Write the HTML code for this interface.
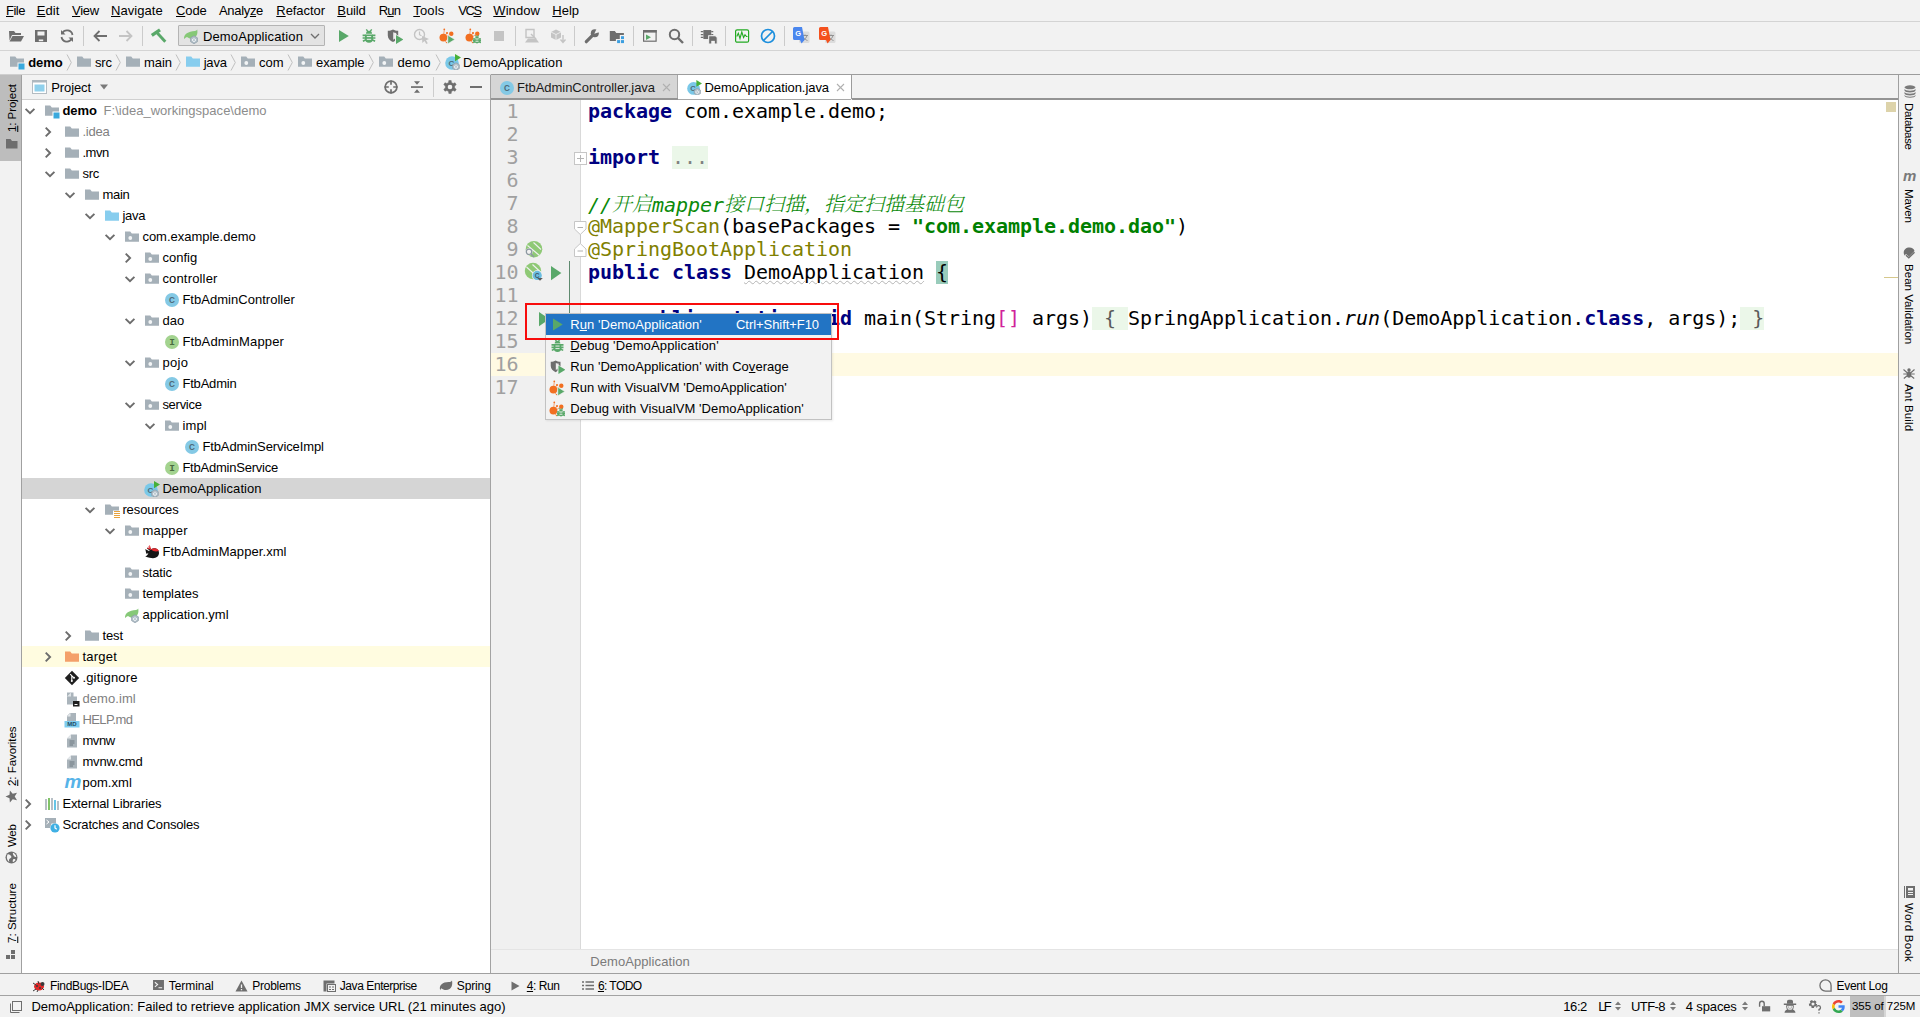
<!DOCTYPE html>
<html lang="en"><head><meta charset="utf-8"><title>demo - DemoApplication.java - IntelliJ IDEA</title>
<style>
html,body{margin:0;padding:0;}
body{width:1920px;height:1017px;overflow:hidden;position:relative;background:#f2f2f2;font-family:"Liberation Sans","Noto Sans CJK SC",sans-serif;font-size:13px;color:#000;}
.t{position:absolute;white-space:pre;display:block;}
.i{position:absolute;display:block;overflow:visible;}
.b{position:absolute;}
u{text-decoration:underline;text-underline-offset:1px;text-decoration-thickness:1px;}
.code{font-family:"DejaVu Sans Mono","Liberation Mono",monospace;font-size:20px;letter-spacing:-0.041px;}
.kw{color:#000080;font-weight:bold;}
.str{color:#008000;font-weight:bold;}
.ann{color:#808000;}
.cm{color:#0a8a0a;font-style:italic;}
.cn{font-family:"Noto Serif CJK SC",serif;font-weight:300;font-style:italic;font-size:20px;letter-spacing:0;position:relative;top:-1.500px;}

</style></head>
<body>

<svg width="0" height="0" style="position:absolute">
<defs>
<symbol id="i-folder" viewBox="0 0 16 16"><path d="M1 2.5h5.2l1.6 2H15v8.2H1z" fill="#a5b0b8"/></symbol>
<symbol id="i-src" viewBox="0 0 16 16"><path d="M1 2.5h5.2l1.6 2H15v8.2H1z" fill="#87cdee"/></symbol>
<symbol id="i-excl" viewBox="0 0 16 16"><path d="M1 2.5h5.2l1.6 2H15v8.2H1z" fill="#f4a06a"/></symbol>
<symbol id="i-pkg" viewBox="0 0 16 16"><path d="M1 2.5h5.2l1.6 2H15v8.2H1z" fill="#a5b0b8"/><circle cx="6.3" cy="9" r="1.9" fill="#f3f5f6"/></symbol>
<symbol id="i-module" viewBox="0 0 16 16"><path d="M1 2.5h5.2l1.6 2H15v4H8.5v4.200H1z" fill="#a5b0b8"/><rect x="9.5" y="9.5" width="6" height="6" fill="#3aa9dd"/></symbol>
<symbol id="i-res" viewBox="0 0 16 16"><path d="M1 2.5h5.2l1.6 2H15v4H9v4.200H1z" fill="#a5b0b8"/><path d="M10 9.5h6M10 11.5h6M10 13.5h6M10 15.5h6" stroke="#e8a33d" stroke-width="1"/></symbol>
<symbol id="i-class" viewBox="0 0 16 16"><circle cx="8" cy="8" r="7" fill="#84c9e5"/><text x="8" y="10.900" text-anchor="middle" font-family="Liberation Sans,sans-serif" font-size="8.200" font-weight="700" fill="#4d6876">C</text></symbol>
<symbol id="i-iface" viewBox="0 0 16 16"><circle cx="8" cy="8" r="7" fill="#a3d38f"/><text x="8" y="11" text-anchor="middle" font-family="Liberation Mono,monospace" font-size="9.500" font-weight="700" fill="#4a6b40">I</text></symbol>
<symbol id="i-app" viewBox="0 0 16 16"><circle cx="7" cy="9" r="6.800" fill="#7ac8e8"/><text x="6.300" y="11.800" text-anchor="middle" font-family="Liberation Sans,sans-serif" font-size="8" font-weight="700" fill="#4d6876">C</text><path d="M10 0l6 3.600L10 7.200z" fill="#47b038"/><path d="M11 8.800l3.300 1.900v3.800L11 16.400l-3.300-1.900v-3.800z" fill="#b3c0c9" stroke="#8b9ba6" stroke-width=".7"/><path d="M9.700 11.800a1.600 1.600 0 1 0 2.600 0M11 10.800v1.600" fill="none" stroke="#f4f7f9" stroke-width=".9"/></symbol>
<symbol id="i-bird" viewBox="0 0 16 16"><path d="M1.200 12.500c1.500-.6 2.500-1.600 3-3C4.800 6.500 7 4.300 10 4.300c3 0 5 2 5 4.700 0 3-2.500 5.200-6 5.200-2.200 0-4.300-.4-7.800-1.700z" fill="#161616"/><path d="M2.200 6.300l3.800 2-3.200.7zM3.300 4l3.500 2.500" stroke="#161616" stroke-width="1.300" fill="#161616"/><path d="M7 5.600c2.200-2 6-1.600 8 1.200-2.500 1.300-5.800.8-8-1.200z" fill="#e3262c"/><path d="M7.300 5.300L4.300 2.800M7 5l-3.700-.6M6.300 4.300L5.500 1.500" stroke="#e3262c" stroke-width="1"/></symbol>
<symbol id="i-yml" viewBox="0 0 16 16"><path d="M1 10.500C1 6 5 3.500 12 3c1-.1 1.800-.8 2.200-1.500.8 3.500-.2 9-6 9-2 0-3.200-.6-4.200-1.500C3 9.500 2 10 1.200 11z" fill="#86c877"/><path d="M11 7.800l3.400 2v3.900l-3.400 2-3.400-2V9.800z" fill="#b3c0c9" stroke="#8b9ba6" stroke-width=".7"/><path d="M9.700 11a1.600 1.600 0 1 0 2.600 0M11 10v1.600" fill="none" stroke="#f4f7f9" stroke-width=".9"/></symbol>
<symbol id="i-git" viewBox="0 0 16 16"><path d="M8 .8L15.200 8 8 15.200.8 8z" fill="#1f1f1f"/><path d="M6.200 4.200l3.500 3.500M7.800 5.500v5.500" stroke="#fff" stroke-width="1.100" fill="none"/><circle cx="7.800" cy="11" r="1" fill="#fff"/><circle cx="10" cy="7.800" r="1" fill="#fff"/></symbol>
<symbol id="i-iml" viewBox="0 0 16 16"><path d="M3 1.500h6.500v4H13v8H3z" fill="#aab4bb"/><path d="M3 5.500L7 1.500v4z" fill="#dfe4e7"/><rect x="9" y="10" width="6.500" height="5.500" fill="#1e1e1e"/><rect x="10.500" y="13" width="3" height="1" fill="#fff"/></symbol>
<symbol id="i-md" viewBox="0 0 16 16"><path d="M6 1h6v8H3V4z" fill="#aab4bb"/><path d="M3 4.500L6.500 1v3.500z" fill="#e3e7ea"/><rect x="0.500" y="9" width="15" height="6.500" fill="#7fcdf0"/><text x="8" y="14.300" text-anchor="middle" font-family="Liberation Sans,sans-serif" font-size="6" font-weight="700" fill="#1e4b63">MD</text></symbol>
<symbol id="i-txt" viewBox="0 0 16 16"><path d="M7 1.500h6v13H3V5.500z" fill="#aab4bb"/><path d="M3 5.500L7 1.500v4z" fill="#e3e7ea"/><path d="M5.500 8h5M5.500 10h5M5.500 12h3.500" stroke="#6d7880" stroke-width="1"/></symbol>
<symbol id="i-lib" viewBox="0 0 16 16"><path d="M2 3v11" stroke="#a5b0b8" stroke-width="1.600"/><path d="M5 2v12" stroke="#62b543" stroke-width="1.600"/><path d="M8 2v12" stroke="#a5b0b8" stroke-width="1.600"/><path d="M11 4v10" stroke="#40b6e0" stroke-width="1.600"/><path d="M14 5v9" stroke="#a5b0b8" stroke-width="1.600"/></symbol>
<symbol id="i-scratch" viewBox="0 0 16 16"><path d="M1 1h11v5.500H7.500L6 11H1z" fill="#a5b0b8"/><path d="M2.500 3l2.500 2-2.500 2" stroke="#fff" stroke-width="1" fill="none"/><circle cx="11" cy="11" r="4.600" fill="#3fb0e4"/><path d="M11 8.300V11l1.800 1.200" stroke="#fff" stroke-width="1.200" fill="none"/></symbol>
<symbol id="i-down" viewBox="0 0 16 16"><path d="M3.600 5.800l4.400 4.400 4.400-4.400" fill="none" stroke="#6c6c6c" stroke-width="1.900"/></symbol>
<symbol id="i-right" viewBox="0 0 16 16"><path d="M3.700 3.600L8.100 8l-4.400 4.400" fill="none" stroke="#6c6c6c" stroke-width="1.900"/></symbol>
<symbol id="i-run" viewBox="0 0 16 16"><path d="M3 2L12.800 8 3 14z" fill="#59a869"/></symbol>
<symbol id="i-bug" viewBox="0 0 16 16"><path d="M5.300 1.300L7 3.600M10.700 1.300L9 3.600" stroke="#59a869" stroke-width="1.400"/><path d="M5 5.800a3 3 0 0 1 6 0z" fill="#59a869"/><path d="M4 6.500h8v4.300a4 4 0 0 1-8 0z" fill="#59a869"/><path d="M1.600 7.300h3M11.400 7.300h3M1.600 10h3M11.400 10h3M1.900 13.200l3-1.400M14.100 13.200l-3-1.400" stroke="#59a869" stroke-width="1.700"/><path d="M5.800 8.600h4.400M5.800 11.300h4.400" stroke="#f2f2f2" stroke-width="1"/></symbol>
<symbol id="i-cover" viewBox="0 0 16 16"><path d="M.8 2.800C2.800 2.800 4.500 2.300 6 1.500c1.500.8 3.200 1.300 5.200 1.300v4.700c0 3.300-2.400 5.300-5.200 6.500C3.200 12.800.8 10.800.8 7.500z" fill="#6e6e6e"/><path d="M6.200 4.200c1 .4 2 .6 3 .7v2.800c0 1.800-1.200 3-3 4z" fill="#ececec"/><path d="M8 5.500l9 6-9 6z" fill="#f2f2f2"/><path d="M9 6.900l7.300 4.600L9 16z" fill="#59a869"/></symbol>
<symbol id="i-vvm" viewBox="0 0 16 16"><circle cx="4.400" cy="9.600" r="3.900" fill="#f26f21"/><circle cx="12.300" cy="5.700" r="2.200" fill="#f26f21"/><circle cx="8" cy="5" r="1.100" fill="#f26f21"/><circle cx="5.300" cy="1.300" r=".9" fill="#f26f21"/><circle cx="7.500" cy="14.600" r=".7" fill="#f26f21"/><path d="M5.300 1.500L4.800 6M7.800 5.200L6.300 7.500M10.800 6.500l-3 2M7.300 14.500L6 12.500" stroke="#f26f21" stroke-width=".6"/><path d="M8.800 7.200l7 4.300-7 4.300z" fill="#59a869" stroke="#f2f2f2" stroke-width=".6"/></symbol>
<symbol id="i-vvmd" viewBox="0 0 16 16"><circle cx="4.400" cy="9.600" r="3.900" fill="#f26f21"/><circle cx="12.300" cy="5.700" r="2.200" fill="#f26f21"/><circle cx="8" cy="5" r="1.100" fill="#f26f21"/><circle cx="5.300" cy="1.300" r=".9" fill="#f26f21"/><circle cx="7.500" cy="14.600" r=".7" fill="#f26f21"/><path d="M5.300 1.500L4.800 6M7.800 5.200L6.300 7.500M10.800 6.500l-3 2M7.300 14.500L6 12.500" stroke="#f26f21" stroke-width=".6"/><g transform="translate(7.200 6.600) scale(.6)"><path d="M5.300 1.300L7 3.600M10.700 1.300L9 3.600" stroke="#59a869" stroke-width="1.800"/><path d="M5 5.800a3 3 0 0 1 6 0z" fill="#59a869"/><path d="M4 6.500h8v4.300a4 4 0 0 1-8 0z" fill="#59a869"/><path d="M1.200 7.300h3.500M11.300 7.300h3.500M1.200 10.200h3.500M11.300 10.200h3.500M1.500 13.500l3.300-1.500M14.500 13.500l-3.300-1.500" stroke="#59a869" stroke-width="2.200"/><path d="M5.500 8.700h5M5.500 11.400h5" stroke="#f2f2f2" stroke-width="1.200"/></g></symbol>
</defs></svg>

<div class="b" style="left:0px;top:21px;width:1920px;height:1px;background:#d4d4d4;"></div>
<span class="t" style="left:6.0px;top:1.0px;height:19px;line-height:19px;font-size:13px;color:#000;letter-spacing:-0.488px;"><u>F</u>ile</span>
<span class="t" style="left:36.7px;top:1.0px;height:19px;line-height:19px;font-size:13px;color:#000;letter-spacing:0.048px;"><u>E</u>dit</span>
<span class="t" style="left:72.0px;top:1.0px;height:19px;line-height:19px;font-size:13px;color:#000;letter-spacing:-0.238px;"><u>V</u>iew</span>
<span class="t" style="left:111.0px;top:1.0px;height:19px;line-height:19px;font-size:13px;color:#000;letter-spacing:0.048px;"><u>N</u>avigate</span>
<span class="t" style="left:176.0px;top:1.0px;height:19px;line-height:19px;font-size:13px;color:#000;letter-spacing:-0.095px;"><u>C</u>ode</span>
<span class="t" style="left:219.0px;top:1.0px;height:19px;line-height:19px;font-size:13px;color:#000;letter-spacing:-0.321px;">Analy<u>z</u>e</span>
<span class="t" style="left:276.3px;top:1.0px;height:19px;line-height:19px;font-size:13px;color:#000;letter-spacing:-0.055px;"><u>R</u>efactor</span>
<span class="t" style="left:337.3px;top:1.0px;height:19px;line-height:19px;font-size:13px;color:#000;letter-spacing:-0.104px;"><u>B</u>uild</span>
<span class="t" style="left:378.7px;top:1.0px;height:19px;line-height:19px;font-size:13px;color:#000;letter-spacing:-0.853px;">R<u>u</u>n</span>
<span class="t" style="left:413.3px;top:1.0px;height:19px;line-height:19px;font-size:13px;color:#000;letter-spacing:0.128px;"><u>T</u>ools</span>
<span class="t" style="left:458.3px;top:1.0px;height:19px;line-height:19px;font-size:13px;color:#000;letter-spacing:-1.445px;">VC<u>S</u></span>
<span class="t" style="left:493.3px;top:1.0px;height:19px;line-height:19px;font-size:13px;color:#000;letter-spacing:0.075px;"><u>W</u>indow</span>
<span class="t" style="left:552.3px;top:1.0px;height:19px;line-height:19px;font-size:13px;color:#000;letter-spacing:-0.012px;"><u>H</u>elp</span>
<div class="b" style="left:0px;top:50px;width:1920px;height:1px;background:#d4d4d4;"></div>
<div class="b" style="left:83px;top:26px;width:1px;height:20px;background:#cbcbcb;"></div>
<div class="b" style="left:142px;top:26px;width:1px;height:20px;background:#cbcbcb;"></div>
<div class="b" style="left:515px;top:26px;width:1px;height:20px;background:#cbcbcb;"></div>
<div class="b" style="left:574px;top:26px;width:1px;height:20px;background:#cbcbcb;"></div>
<div class="b" style="left:633px;top:26px;width:1px;height:20px;background:#cbcbcb;"></div>
<div class="b" style="left:692px;top:26px;width:1px;height:20px;background:#cbcbcb;"></div>
<div class="b" style="left:725px;top:26px;width:1px;height:20px;background:#cbcbcb;"></div>
<div class="b" style="left:784px;top:26px;width:1px;height:20px;background:#cbcbcb;"></div>
<svg class="i" style="left:8px;top:28.0px" width="16" height="16" viewBox="0 0 16 16"><path d="M1 3h5l1.500 2H13v2H4L1.500 12.500z" fill="#6e6e6e"/><path d="M4.500 8H16l-3 5.500H1.500z" fill="#6e6e6e"/></svg>
<svg class="i" style="left:33px;top:28.0px" width="16" height="16" viewBox="0 0 16 16"><path d="M2 2h12v12H2z" fill="#6e6e6e"/><rect x="4.500" y="3.500" width="7" height="4" fill="#f2f2f2"/><rect x="5.800" y="11.500" width="4.400" height="1.700" fill="#f2f2f2"/></svg>
<svg class="i" style="left:59px;top:28.0px" width="16" height="16" viewBox="0 0 16 16"><path d="M13.500 7A5.500 5.500 0 0 0 3.200 5.300" fill="none" stroke="#6e6e6e" stroke-width="1.800"/><path d="M2 2v4.500h4.500z" fill="#6e6e6e"/><path d="M2.500 9a5.500 5.500 0 0 0 10.300 1.700" fill="none" stroke="#6e6e6e" stroke-width="1.800"/><path d="M14 14V9.500H9.500z" fill="#6e6e6e"/></svg>
<svg class="i" style="left:92px;top:28.0px" width="16" height="16" viewBox="0 0 16 16"><path d="M15 8H3M7.500 3L2.500 8l5 5" fill="none" stroke="#6e6e6e" stroke-width="1.800"/></svg>
<svg class="i" style="left:118px;top:28.0px" width="16" height="16" viewBox="0 0 16 16"><path d="M1 8h12M8.500 3l5 5-5 5" fill="none" stroke="#c4c4c4" stroke-width="1.800"/></svg>
<svg class="i" style="left:150px;top:28.0px" width="16" height="16" viewBox="0 0 16 16"><path d="M1.800 7.400L10 1.800" stroke="#59a869" stroke-width="3.300" fill="none"/><path d="M7.300 5L15.300 13.800" stroke="#59a869" stroke-width="2.900" fill="none"/></svg>
<div class="b" style="left:178px;top:25px;width:147px;height:21px;background:#e3e3e3;border:1px solid #b4b4b4;box-sizing:border-box;border-radius:1px;"></div>
<svg class="i" style="left:183px;top:28px;" width="16" height="16"><use href="#i-yml"/></svg>
<span class="t" style="left:203.0px;top:26.5px;height:19px;line-height:19px;font-size:13px;color:#000;letter-spacing:0.115px;">DemoApplication</span>
<svg class="i" style="left:309px;top:31px" width="12" height="10" viewBox="0 0 12 10"><path d="M2 3l4 4 4-4" fill="none" stroke="#6e6e6e" stroke-width="1.300"/></svg>
<svg class="i" style="left:336px;top:28px;" width="16" height="16"><use href="#i-run"/></svg>
<svg class="i" style="left:361px;top:28px;" width="16" height="16"><use href="#i-bug"/></svg>
<svg class="i" style="left:387px;top:28px;" width="16" height="16"><use href="#i-cover"/></svg>
<svg class="i" style="left:413px;top:28.0px" width="16" height="16" viewBox="0 0 16 16"><circle cx="6.500" cy="6.500" r="5" fill="none" stroke="#c4c4c4" stroke-width="1.400"/><path d="M6.500 3.500v3.200l2 1" fill="none" stroke="#c4c4c4" stroke-width="1.200"/><path d="M9 8l7 3-3 1.200 1.800 3-1.500.8-1.800-3-2.200 2z" fill="#c4c4c4"/></svg>
<svg class="i" style="left:439px;top:28px;" width="16" height="16"><use href="#i-vvm"/></svg>
<svg class="i" style="left:465px;top:28px;" width="16" height="16"><use href="#i-vvmd"/></svg>
<div class="b" style="left:494px;top:31px;width:10px;height:10px;background:#c4c4c4;"></div>
<svg class="i" style="left:524px;top:28.0px" width="16" height="16" viewBox="0 0 16 16"><path d="M2 1.500h8v8H2z" fill="none" stroke="#c4c4c4" stroke-width="1.400"/><path d="M1 14.500l3-4h8l3 4z" fill="#c4c4c4"/><path d="M7 6l5 5" stroke="#c4c4c4" stroke-width="1.400"/></svg>
<svg class="i" style="left:550px;top:28.0px" width="16" height="16" viewBox="0 0 16 16"><path d="M1 4l5-2.500L11 4v5.500L6 12 1 9.500z" fill="#c4c4c4"/><path d="M1 4l5 2.500L11 4M6 6.500V12" stroke="#f2f2f2" stroke-width=".8" fill="none"/><path d="M13 7v7M10.500 11.500l2.500 3 2.500-3" fill="none" stroke="#c4c4c4" stroke-width="1.400"/></svg>
<svg class="i" style="left:584px;top:28.0px" width="16" height="16" viewBox="0 0 16 16"><path d="M2.300 13.700L9.300 6.700" stroke="#6e6e6e" stroke-width="3.200" stroke-linecap="round" fill="none"/><circle cx="10.800" cy="5.200" r="4" fill="#6e6e6e"/><path d="M10.300 5.700L13.200 -.5h4v4z" fill="#f2f2f2"/></svg>
<svg class="i" style="left:609px;top:28.0px" width="16" height="16" viewBox="0 0 16 16"><path d="M.8 3h5l1.500 2h7.600v2H10.800v4H6.900v2H.8z" fill="#6e6e6e"/><rect x="12" y="8.200" width="3" height="2.900" fill="#3d9fe0"/><rect x="8.100" y="12.100" width="3" height="3" fill="#3d9fe0"/><rect x="12" y="12.100" width="3" height="3" fill="#3d9fe0"/></svg>
<svg class="i" style="left:642px;top:28.0px" width="16" height="16" viewBox="0 0 16 16"><rect x="1.600" y="2.600" width="12.500" height="10.600" fill="none" stroke="#6e6e6e" stroke-width="1.200"/><rect x="1" y="2" width="13.700" height="2.600" fill="#6e6e6e"/><path d="M4 6.500l5 2.800-5 2.800z" fill="#59a869"/></svg>
<svg class="i" style="left:668px;top:28.0px" width="16" height="16" viewBox="0 0 16 16"><circle cx="6.500" cy="6.500" r="4.700" fill="none" stroke="#6e6e6e" stroke-width="2"/><path d="M10 10l5 5" stroke="#6e6e6e" stroke-width="2.400"/></svg>
<svg class="i" style="left:700px;top:27.0px" width="18" height="18" viewBox="0 0 16 16"><rect x="3" y="2.700" width="7" height="8" fill="#6e6e6e"/><path d="M.7 4.200h2.300M.7 6.700h2.300M.7 9.200h2.300M10 4.200h1.800M10 6.700h1.800" stroke="#6e6e6e" stroke-width="1.100"/><path d="M7.700 7.700h6l1.600 1.600v5.800H7.700z" fill="#6e6e6e" stroke="#f2f2f2" stroke-width=".9"/><rect x="10" y="12.300" width="3.200" height="2.800" fill="#f2f2f2"/></svg>
<svg class="i" style="left:734px;top:28.0px" width="16" height="16" viewBox="0 0 16 16"><rect x="1.600" y="1.800" width="13" height="12.400" rx="1.500" fill="none" stroke="#22aa22" stroke-width="1.200"/><path d="M2.800 8.500l1.500-3.300 1.700 5.300 1.800-6.500 1.800 5.500 1.400-2.700 1.500 1.700h1" fill="none" stroke="#22aa22" stroke-width="1.100"/></svg>
<svg class="i" style="left:760px;top:28.0px" width="16" height="16" viewBox="0 0 16 16"><circle cx="8" cy="8" r="6.500" fill="none" stroke="#1d8fdd" stroke-width="1.700"/><path d="M12.500 3.500l-9 9" stroke="#1d8fdd" stroke-width="1.700"/></svg>
<svg class="i" style="left:792px;top:27px" width="18" height="18" viewBox="0 0 18 18"><rect x="7" y="4.500" width="10.500" height="11.500" rx="1.500" fill="#dcdcdc"/><path d="M10 8.500h6M13 7.500v1M11 13.500c2-1 3.500-3 4-5M11.500 10.500c1 1.500 2.500 2.500 4 3" fill="none" stroke="#8b8b8b" stroke-width=".9"/><path d="M1 1.500a1.500 1.500 0 0 1 1.500-1.500h7.500l2.500 13H2.500A1.500 1.500 0 0 1 1 11.500z" fill="#4a86ee"/><text x="6.200" y="9.300" text-anchor="middle" font-family="Liberation Sans,sans-serif" font-size="7.500" font-weight="700" fill="#fff">G</text><path d="M8 13l4.500 0-3 3.500z" fill="#4a86ee"/></svg>
<svg class="i" style="left:818px;top:27px" width="18" height="18" viewBox="0 0 18 18"><rect x="7" y="4.500" width="10.500" height="11.500" rx="1.500" fill="#dcdcdc"/><path d="M10 8.500h6M13 7.500v1M11 13.500c2-1 3.500-3 4-5M11.500 10.500c1 1.500 2.500 2.500 4 3" fill="none" stroke="#8b8b8b" stroke-width=".9"/><path d="M1 1.500a1.500 1.500 0 0 1 1.500-1.500h7.500l2.500 13H2.500A1.500 1.500 0 0 1 1 11.500z" fill="#f4511e"/><text x="6.200" y="9.300" text-anchor="middle" font-family="Liberation Sans,sans-serif" font-size="7.500" font-weight="700" fill="#fff">G</text><path d="M8 13l4.500 0-3 3.500z" fill="#f4511e"/></svg>
<div class="b" style="left:0px;top:74px;width:491px;height:1px;background:#cfcfcf;"></div>
<div class="b" style="left:491px;top:74px;width:1429px;height:1px;background:#9c9c9c;"></div>
<svg class="i" style="left:9px;top:54px;" width="16" height="16"><use href="#i-module"/></svg>
<span class="t" style="left:28.3px;top:53.0px;height:19px;line-height:19px;font-size:13px;color:#000;font-weight:700;letter-spacing:-0.118px;">demo</span>
<svg class="i" style="left:66px;top:53px" width="7" height="19" viewBox="0 0 7 19"><path d="M1 1.500l4.300 8L1 17.500" fill="none" stroke="#c0c0c0" stroke-width="1"/></svg>
<svg class="i" style="left:76px;top:54px;" width="16" height="16"><use href="#i-folder"/></svg>
<span class="t" style="left:95.0px;top:53.0px;height:19px;line-height:19px;font-size:13px;color:#000;letter-spacing:-0.215px;">src</span>
<svg class="i" style="left:115px;top:53px" width="7" height="19" viewBox="0 0 7 19"><path d="M1 1.500l4.300 8L1 17.500" fill="none" stroke="#c0c0c0" stroke-width="1"/></svg>
<svg class="i" style="left:125px;top:54px;" width="16" height="16"><use href="#i-folder"/></svg>
<span class="t" style="left:144.0px;top:53.0px;height:19px;line-height:19px;font-size:13px;color:#000;letter-spacing:-0.047px;">main</span>
<svg class="i" style="left:175px;top:53px" width="7" height="19" viewBox="0 0 7 19"><path d="M1 1.500l4.300 8L1 17.500" fill="none" stroke="#c0c0c0" stroke-width="1"/></svg>
<svg class="i" style="left:185px;top:54px;" width="16" height="16"><use href="#i-src"/></svg>
<span class="t" style="left:203.7px;top:53.0px;height:19px;line-height:19px;font-size:13px;color:#000;letter-spacing:-0.215px;">java</span>
<svg class="i" style="left:230px;top:53px" width="7" height="19" viewBox="0 0 7 19"><path d="M1 1.500l4.300 8L1 17.500" fill="none" stroke="#c0c0c0" stroke-width="1"/></svg>
<svg class="i" style="left:240px;top:54px;" width="16" height="16"><use href="#i-pkg"/></svg>
<span class="t" style="left:259.0px;top:53.0px;height:19px;line-height:19px;font-size:13px;color:#000;letter-spacing:0.046px;">com</span>
<svg class="i" style="left:287px;top:53px" width="7" height="19" viewBox="0 0 7 19"><path d="M1 1.500l4.300 8L1 17.500" fill="none" stroke="#c0c0c0" stroke-width="1"/></svg>
<svg class="i" style="left:297px;top:54px;" width="16" height="16"><use href="#i-pkg"/></svg>
<span class="t" style="left:316.0px;top:53.0px;height:19px;line-height:19px;font-size:13px;color:#000;letter-spacing:-0.092px;">example</span>
<svg class="i" style="left:368px;top:53px" width="7" height="19" viewBox="0 0 7 19"><path d="M1 1.500l4.300 8L1 17.500" fill="none" stroke="#c0c0c0" stroke-width="1"/></svg>
<svg class="i" style="left:378px;top:54px;" width="16" height="16"><use href="#i-pkg"/></svg>
<span class="t" style="left:397.5px;top:53.0px;height:19px;line-height:19px;font-size:13px;color:#000;letter-spacing:0.117px;">demo</span>
<svg class="i" style="left:434.5px;top:53px" width="7" height="19" viewBox="0 0 7 19"><path d="M1 1.500l4.300 8L1 17.500" fill="none" stroke="#c0c0c0" stroke-width="1"/></svg>
<svg class="i" style="left:445px;top:54px;" width="16" height="16"><use href="#i-app"/></svg>
<span class="t" style="left:463.0px;top:53.0px;height:19px;line-height:19px;font-size:13px;color:#000;letter-spacing:0.081px;">DemoApplication</span>
<div class="b" style="left:21px;top:75px;width:1px;height:898px;background:#a0a0a0;"></div>
<div class="b" style="left:0px;top:75px;width:21px;height:86px;background:#bdbdbd;"></div>
<span class="t" style="left:0.0px;top:-8.8px;height:17.5px;line-height:17.5px;font-size:11.5px;color:#000;letter-spacing:-0.058px;left:12.5px;top:132.2px;transform-origin:0 0;transform:rotate(-90deg) translateY(-50%);"><u>1</u>: Project</span>
<svg class="i" style="left:6px;top:139px" width="12" height="10" viewBox="0 0 12 10"><path d="M0 0h4.500L6 2h5.500v7.500H0z" fill="#6e6e6e"/></svg>
<span class="t" style="left:0.0px;top:-8.8px;height:17.5px;line-height:17.5px;font-size:11.5px;color:#000;letter-spacing:-0.048px;left:12.5px;top:785.5px;transform-origin:0 0;transform:rotate(-90deg) translateY(-50%);"><u>2</u>: Favorites</span>
<svg class="i" style="left:5px;top:790px" width="13" height="13" viewBox="0 0 13 13"><path d="M6.500 .5l1.800 4 4.200.4-3.200 2.800 1 4.300-3.800-2.300-3.800 2.300 1-4.300L.5 4.900l4.200-.4z" fill="#6e6e6e" transform="rotate(-90 6.500 6.500)"/></svg>
<span class="t" style="left:0.0px;top:-8.8px;height:17.5px;line-height:17.5px;font-size:11.5px;color:#000;letter-spacing:-0.284px;left:12.5px;top:846.6px;transform-origin:0 0;transform:rotate(-90deg) translateY(-50%);">Web</span>
<svg class="i" style="left:5px;top:851px" width="13" height="13" viewBox="0 0 13 13"><circle cx="6.500" cy="6.500" r="6" fill="#6e6e6e"/><path d="M2.500 3.500c1.500-.5 2.500.5 3.500 1.500s0 2-1 2.500-1.500 2-.5 3.500c-2-1-3.500-4.500-2-7.500zM8 1.800c1.500.5 3 2 3.300 4-1 .5-2 0-2.500-1S7.500 3 8 1.800zM8.500 8c1-.3 2 .2 2 1-.5 1-1.500 1.800-2.500 2.200-.5-1-.3-2.500.5-3.200z" fill="#f2f2f2"/></svg>
<span class="t" style="left:0.0px;top:-8.8px;height:17.5px;line-height:17.5px;font-size:11.5px;color:#000;letter-spacing:0.037px;left:12.5px;top:943.4px;transform-origin:0 0;transform:rotate(-90deg) translateY(-50%);"><u>7</u>: Structure</span>
<div class="b" style="left:6px;top:955px;width:4px;height:4px;background:#6e6e6e;"></div>
<div class="b" style="left:11px;top:955px;width:4px;height:4px;background:#6e6e6e;"></div>
<div class="b" style="left:11px;top:950px;width:4px;height:4px;background:#6e6e6e;"></div>
<div class="b" style="left:22px;top:75px;width:468px;height:24px;background:#f2f2f2;"></div>
<div class="b" style="left:22px;top:99px;width:468px;height:1px;background:#d0d0d0;"></div>
<div class="b" style="left:22px;top:100px;width:468px;height:873px;background:#fff;"></div>
<div class="b" style="left:490px;top:75px;width:1px;height:898px;background:#a3a3a3;"></div>
<svg class="i" style="left:32px;top:80px" width="15" height="14" viewBox="0 0 15 14"><rect x=".5" y=".5" width="14" height="13" fill="#fff" stroke="#b4bcc2"/><rect x="0" y="0" width="15" height="2.500" fill="#aeb8bf"/><rect x="2.500" y="4.500" width="10" height="7" fill="#8fd0ec"/></svg>
<span class="t" style="left:51.3px;top:77.5px;height:19px;line-height:19px;font-size:13px;color:#000;letter-spacing:-0.110px;">Project</span>
<svg class="i" style="left:99px;top:84px" width="10" height="6" viewBox="0 0 10 6"><path d="M1 .5h8L5 5.500z" fill="#7a7a7a"/></svg>
<svg class="i" style="left:383px;top:79px" width="16" height="16" viewBox="0 0 16 16"><circle cx="8" cy="8" r="5.900" fill="none" stroke="#6e6e6e" stroke-width="1.700"/><path d="M8 1.500v4.300M8 10.200v4.300M1.500 8h4.300M10.200 8h4.300" stroke="#6e6e6e" stroke-width="1.700"/></svg>
<svg class="i" style="left:409px;top:79px" width="16" height="16" viewBox="0 0 16 16"><rect x="2" y="7.200" width="12" height="1.700" fill="#6e6e6e"/><path d="M5 2.300h6L8 5.800z M5 13.700h6L8 10.200z" fill="#6e6e6e"/></svg>
<div class="b" style="left:433px;top:77px;width:1px;height:20px;background:#cdcdcd;"></div>
<svg class="i" style="left:442px;top:79px" width="16" height="16" viewBox="0 0 16 16"><path d="M9.45 3.53L9.17 1.50L6.83 1.50L6.55 3.53L4.86 4.51L2.96 3.74L1.79 5.76L3.40 7.02L3.40 8.98L1.79 10.24L2.96 12.26L4.86 11.49L6.55 12.47L6.83 14.50L9.17 14.50L9.45 12.47L11.14 11.49L13.04 12.26L14.21 10.24L12.60 8.98L12.60 7.02L14.21 5.76L13.04 3.74L11.14 4.51z" fill="#6e6e6e" stroke="#6e6e6e" stroke-width=".5" stroke-linejoin="round"/><circle cx="8" cy="8" r="2.300" fill="#f2f2f2"/></svg>
<div class="b" style="left:470px;top:86px;width:12px;height:2px;background:#6e6e6e;"></div>
<svg class="i" style="left:22px;top:102.5px;" width="16" height="16"><use href="#i-down"/></svg>
<svg class="i" style="left:44px;top:102.5px;" width="16" height="16"><use href="#i-module"/></svg>
<span class="t" style="left:62.4px;top:101.0px;height:19px;line-height:19px;font-size:13px;color:#000;font-weight:700;letter-spacing:-0.068px;">demo</span>
<span class="t" style="left:103.6px;top:101.0px;height:19px;line-height:19px;font-size:13px;color:#8c8c8c;letter-spacing:0.016px;">F:\idea_workingspace\demo</span>
<svg class="i" style="left:42px;top:123.5px;" width="16" height="16"><use href="#i-right"/></svg>
<svg class="i" style="left:64px;top:123.5px;" width="16" height="16"><use href="#i-folder"/></svg>
<span class="t" style="left:82.4px;top:122.0px;height:19px;line-height:19px;font-size:13px;color:#808080;letter-spacing:-0.221px;">.idea</span>
<svg class="i" style="left:42px;top:144.5px;" width="16" height="16"><use href="#i-right"/></svg>
<svg class="i" style="left:64px;top:144.5px;" width="16" height="16"><use href="#i-folder"/></svg>
<span class="t" style="left:82.4px;top:143.0px;height:19px;line-height:19px;font-size:13px;color:#000;letter-spacing:-0.468px;">.mvn</span>
<svg class="i" style="left:42px;top:165.5px;" width="16" height="16"><use href="#i-down"/></svg>
<svg class="i" style="left:64px;top:165.5px;" width="16" height="16"><use href="#i-folder"/></svg>
<span class="t" style="left:82.4px;top:164.0px;height:19px;line-height:19px;font-size:13px;color:#000;letter-spacing:-0.215px;">src</span>
<svg class="i" style="left:62px;top:186.5px;" width="16" height="16"><use href="#i-down"/></svg>
<svg class="i" style="left:84px;top:186.5px;" width="16" height="16"><use href="#i-folder"/></svg>
<span class="t" style="left:102.4px;top:185.0px;height:19px;line-height:19px;font-size:13px;color:#000;letter-spacing:-0.272px;">main</span>
<svg class="i" style="left:82px;top:207.5px;" width="16" height="16"><use href="#i-down"/></svg>
<svg class="i" style="left:104px;top:207.5px;" width="16" height="16"><use href="#i-src"/></svg>
<span class="t" style="left:122.4px;top:206.0px;height:19px;line-height:19px;font-size:13px;color:#000;letter-spacing:-0.240px;">java</span>
<svg class="i" style="left:102px;top:228.5px;" width="16" height="16"><use href="#i-down"/></svg>
<svg class="i" style="left:124px;top:228.5px;" width="16" height="16"><use href="#i-pkg"/></svg>
<span class="t" style="left:142.4px;top:227.0px;height:19px;line-height:19px;font-size:13px;color:#000;letter-spacing:-0.010px;">com.example.demo</span>
<svg class="i" style="left:122px;top:249.5px;" width="16" height="16"><use href="#i-right"/></svg>
<svg class="i" style="left:144px;top:249.5px;" width="16" height="16"><use href="#i-pkg"/></svg>
<span class="t" style="left:162.4px;top:248.0px;height:19px;line-height:19px;font-size:13px;color:#000;letter-spacing:0.033px;">config</span>
<svg class="i" style="left:122px;top:270.5px;" width="16" height="16"><use href="#i-down"/></svg>
<svg class="i" style="left:144px;top:270.5px;" width="16" height="16"><use href="#i-pkg"/></svg>
<span class="t" style="left:162.4px;top:269.0px;height:19px;line-height:19px;font-size:13px;color:#000;letter-spacing:0.173px;">controller</span>
<svg class="i" style="left:164px;top:291.5px;" width="16" height="16"><use href="#i-class"/></svg>
<span class="t" style="left:182.4px;top:290.0px;height:19px;line-height:19px;font-size:13px;color:#000;letter-spacing:0.028px;">FtbAdminController</span>
<svg class="i" style="left:122px;top:312.5px;" width="16" height="16"><use href="#i-down"/></svg>
<svg class="i" style="left:144px;top:312.5px;" width="16" height="16"><use href="#i-pkg"/></svg>
<span class="t" style="left:162.4px;top:311.0px;height:19px;line-height:19px;font-size:13px;color:#000;letter-spacing:0.066px;">dao</span>
<svg class="i" style="left:164px;top:333.5px;" width="16" height="16"><use href="#i-iface"/></svg>
<span class="t" style="left:182.4px;top:332.0px;height:19px;line-height:19px;font-size:13px;color:#000;letter-spacing:0.134px;">FtbAdminMapper</span>
<svg class="i" style="left:122px;top:354.5px;" width="16" height="16"><use href="#i-down"/></svg>
<svg class="i" style="left:144px;top:354.5px;" width="16" height="16"><use href="#i-pkg"/></svg>
<span class="t" style="left:162.4px;top:353.0px;height:19px;line-height:19px;font-size:13px;color:#000;letter-spacing:0.355px;">pojo</span>
<svg class="i" style="left:164px;top:375.5px;" width="16" height="16"><use href="#i-class"/></svg>
<span class="t" style="left:182.4px;top:374.0px;height:19px;line-height:19px;font-size:13px;color:#000;letter-spacing:-0.180px;">FtbAdmin</span>
<svg class="i" style="left:122px;top:396.5px;" width="16" height="16"><use href="#i-down"/></svg>
<svg class="i" style="left:144px;top:396.5px;" width="16" height="16"><use href="#i-pkg"/></svg>
<span class="t" style="left:162.4px;top:395.0px;height:19px;line-height:19px;font-size:13px;color:#000;letter-spacing:-0.270px;">service</span>
<svg class="i" style="left:142px;top:417.5px;" width="16" height="16"><use href="#i-down"/></svg>
<svg class="i" style="left:164px;top:417.5px;" width="16" height="16"><use href="#i-pkg"/></svg>
<span class="t" style="left:182.4px;top:416.0px;height:19px;line-height:19px;font-size:13px;color:#000;letter-spacing:0.164px;">impl</span>
<svg class="i" style="left:184px;top:438.5px;" width="16" height="16"><use href="#i-class"/></svg>
<span class="t" style="left:202.4px;top:437.0px;height:19px;line-height:19px;font-size:13px;color:#000;letter-spacing:-0.113px;">FtbAdminServiceImpl</span>
<svg class="i" style="left:164px;top:459.5px;" width="16" height="16"><use href="#i-iface"/></svg>
<span class="t" style="left:182.4px;top:458.0px;height:19px;line-height:19px;font-size:13px;color:#000;letter-spacing:-0.226px;">FtbAdminService</span>
<div class="b" style="left:22px;top:478px;width:468px;height:21px;background:#d5d5d5;"></div>
<svg class="i" style="left:144px;top:480.5px;" width="16" height="16"><use href="#i-app"/></svg>
<span class="t" style="left:162.4px;top:479.0px;height:19px;line-height:19px;font-size:13px;color:#000;letter-spacing:0.061px;">DemoApplication</span>
<svg class="i" style="left:82px;top:501.5px;" width="16" height="16"><use href="#i-down"/></svg>
<svg class="i" style="left:104px;top:501.5px;" width="16" height="16"><use href="#i-res"/></svg>
<span class="t" style="left:122.4px;top:500.0px;height:19px;line-height:19px;font-size:13px;color:#000;letter-spacing:-0.098px;">resources</span>
<svg class="i" style="left:102px;top:522.5px;" width="16" height="16"><use href="#i-down"/></svg>
<svg class="i" style="left:124px;top:522.5px;" width="16" height="16"><use href="#i-pkg"/></svg>
<span class="t" style="left:142.4px;top:521.0px;height:19px;line-height:19px;font-size:13px;color:#000;letter-spacing:0.220px;">mapper</span>
<svg class="i" style="left:144px;top:543.5px;" width="16" height="16"><use href="#i-bird"/></svg>
<span class="t" style="left:162.4px;top:542.0px;height:19px;line-height:19px;font-size:13px;color:#000;letter-spacing:0.076px;">FtbAdminMapper.xml</span>
<svg class="i" style="left:124px;top:564.5px;" width="16" height="16"><use href="#i-pkg"/></svg>
<span class="t" style="left:142.4px;top:563.0px;height:19px;line-height:19px;font-size:13px;color:#000;letter-spacing:-0.141px;">static</span>
<svg class="i" style="left:124px;top:585.5px;" width="16" height="16"><use href="#i-pkg"/></svg>
<span class="t" style="left:142.4px;top:584.0px;height:19px;line-height:19px;font-size:13px;color:#000;letter-spacing:-0.042px;">templates</span>
<svg class="i" style="left:124px;top:606.5px;" width="16" height="16"><use href="#i-yml"/></svg>
<span class="t" style="left:142.4px;top:605.0px;height:19px;line-height:19px;font-size:13px;color:#000;letter-spacing:0.013px;">application.yml</span>
<svg class="i" style="left:62px;top:627.5px;" width="16" height="16"><use href="#i-right"/></svg>
<svg class="i" style="left:84px;top:627.5px;" width="16" height="16"><use href="#i-folder"/></svg>
<span class="t" style="left:102.4px;top:626.0px;height:19px;line-height:19px;font-size:13px;color:#000;letter-spacing:-0.092px;">test</span>
<div class="b" style="left:22px;top:646px;width:468px;height:21px;background:#fffce0;"></div>
<svg class="i" style="left:42px;top:648.5px;" width="16" height="16"><use href="#i-right"/></svg>
<svg class="i" style="left:64px;top:648.5px;" width="16" height="16"><use href="#i-excl"/></svg>
<span class="t" style="left:82.4px;top:647.0px;height:19px;line-height:19px;font-size:13px;color:#000;letter-spacing:0.225px;">target</span>
<svg class="i" style="left:64px;top:669.5px;" width="16" height="16"><use href="#i-git"/></svg>
<span class="t" style="left:82.4px;top:668.0px;height:19px;line-height:19px;font-size:13px;color:#000;letter-spacing:0.172px;">.gitignore</span>
<svg class="i" style="left:64px;top:690.5px;" width="16" height="16"><use href="#i-iml"/></svg>
<span class="t" style="left:82.4px;top:689.0px;height:19px;line-height:19px;font-size:13px;color:#808080;letter-spacing:0.081px;">demo.iml</span>
<svg class="i" style="left:64px;top:711.5px;" width="16" height="16"><use href="#i-md"/></svg>
<span class="t" style="left:82.4px;top:710.0px;height:19px;line-height:19px;font-size:13px;color:#808080;letter-spacing:-0.567px;">HELP.md</span>
<svg class="i" style="left:64px;top:732.5px;" width="16" height="16"><use href="#i-txt"/></svg>
<span class="t" style="left:82.4px;top:731.0px;height:19px;line-height:19px;font-size:13px;color:#000;letter-spacing:-0.363px;">mvnw</span>
<svg class="i" style="left:64px;top:753.5px;" width="16" height="16"><use href="#i-txt"/></svg>
<span class="t" style="left:82.4px;top:752.0px;height:19px;line-height:19px;font-size:13px;color:#000;letter-spacing:-0.163px;">mvnw.cmd</span>
<span class="t" style="left:64.5px;top:772.0px;height:20px;line-height:20px;font-size:19px;color:#56b3e8;font-weight:700;font-style:italic;letter-spacing:-2.406px;">m</span>
<span class="t" style="left:82.4px;top:773.0px;height:19px;line-height:19px;font-size:13px;color:#000;letter-spacing:0.054px;">pom.xml</span>
<svg class="i" style="left:22px;top:795.5px;" width="16" height="16"><use href="#i-right"/></svg>
<svg class="i" style="left:44px;top:795.5px;" width="16" height="16"><use href="#i-lib"/></svg>
<span class="t" style="left:62.4px;top:794.0px;height:19px;line-height:19px;font-size:13px;color:#000;letter-spacing:-0.120px;">External Libraries</span>
<svg class="i" style="left:22px;top:816.5px;" width="16" height="16"><use href="#i-right"/></svg>
<svg class="i" style="left:44px;top:816.5px;" width="16" height="16"><use href="#i-scratch"/></svg>
<span class="t" style="left:62.4px;top:815.0px;height:19px;line-height:19px;font-size:13px;color:#000;letter-spacing:-0.178px;">Scratches and Consoles</span>
<div class="b" style="left:491px;top:75px;width:1407px;height:24px;background:#f2f2f2;"></div>
<div class="b" style="left:491px;top:75px;width:186px;height:23px;background:#d6d6d6;"></div>
<div class="b" style="left:677px;top:75px;width:1px;height:23px;background:#a8a8a8;"></div>
<div class="b" style="left:678px;top:75px;width:173px;height:24px;background:#fff;"></div>
<div class="b" style="left:851px;top:75px;width:1px;height:24px;background:#9c9c9c;"></div>
<div class="b" style="left:491px;top:98px;width:187px;height:2px;background:#949494;"></div>
<div class="b" style="left:678px;top:99px;width:173px;height:1px;background:#a8a8a8;"></div>
<div class="b" style="left:852px;top:98px;width:1046px;height:2px;background:#949494;"></div>
<svg class="i" style="left:499px;top:80px;" width="16" height="16"><use href="#i-class"/></svg>
<span class="t" style="left:517.0px;top:77.5px;height:19px;line-height:19px;font-size:13px;color:#1a1a1a;letter-spacing:-0.032px;">FtbAdminController.java</span>
<svg class="i" style="left:661.5px;top:83px" width="9" height="9" viewBox="0 0 9 9"><path d="M1 1l7 7M8 1L1 8" stroke="#b0b0b0" stroke-width="1.100"/></svg>
<svg class="i" style="left:686.5px;top:79.5px;" width="15" height="15"><use href="#i-app"/></svg>
<span class="t" style="left:704.5px;top:77.5px;height:19px;line-height:19px;font-size:13px;color:#000;letter-spacing:-0.062px;">DemoApplication.java</span>
<svg class="i" style="left:835.5px;top:83px" width="9" height="9" viewBox="0 0 9 9"><path d="M1 1l7 7M8 1L1 8" stroke="#b0b0b0" stroke-width="1.100"/></svg>
<div class="b" style="left:491px;top:100px;width:1407px;height:849px;background:#fff;"></div>
<div class="b" style="left:491px;top:100px;width:89px;height:849px;background:#f0f0f0;"></div>
<div class="b" style="left:580px;top:100px;width:1px;height:849px;background:#d9d9d9;"></div>
<div class="b" style="left:491px;top:353px;width:1407px;height:23px;background:#fffae3;"></div>
<div class="b" style="left:491px;top:353px;width:89px;height:23px;background:#fffae3;"></div>
<div class="b" style="left:1886px;top:102px;width:10px;height:10px;background:#ddd3aa;"></div>
<div class="b" style="left:1884px;top:277px;width:14px;height:1px;background:#d6c88c;"></div>
<div class="b" style="left:491px;top:949px;width:1407px;height:24px;background:#f2f2f2;"></div>
<div class="b" style="left:491px;top:949px;width:1407px;height:1px;background:#e4e4e4;"></div>
<span class="t" style="left:590.2px;top:951.5px;height:19px;line-height:19px;font-size:13px;color:#7a7a7a;letter-spacing:0.088px;">DemoApplication</span>
<span class="t code" style="left:506.50px;top:100px;height:23px;line-height:23px;color:#a0a0a0;">1</span>
<span class="t code" style="left:506.50px;top:123px;height:23px;line-height:23px;color:#a0a0a0;">2</span>
<span class="t code" style="left:506.50px;top:146px;height:23px;line-height:23px;color:#a0a0a0;">3</span>
<span class="t code" style="left:506.50px;top:169px;height:23px;line-height:23px;color:#a0a0a0;">6</span>
<span class="t code" style="left:506.50px;top:192px;height:23px;line-height:23px;color:#a0a0a0;">7</span>
<span class="t code" style="left:506.50px;top:215px;height:23px;line-height:23px;color:#a0a0a0;">8</span>
<span class="t code" style="left:506.50px;top:238px;height:23px;line-height:23px;color:#a0a0a0;">9</span>
<span class="t code" style="left:494.50px;top:261px;height:23px;line-height:23px;color:#a0a0a0;">10</span>
<span class="t code" style="left:494.50px;top:284px;height:23px;line-height:23px;color:#a0a0a0;">11</span>
<span class="t code" style="left:494.50px;top:307px;height:23px;line-height:23px;color:#a0a0a0;">12</span>
<span class="t code" style="left:494.50px;top:330px;height:23px;line-height:23px;color:#a0a0a0;">15</span>
<span class="t code" style="left:494.50px;top:353px;height:23px;line-height:23px;color:#a0a0a0;">16</span>
<span class="t code" style="left:494.50px;top:376px;height:23px;line-height:23px;color:#a0a0a0;">17</span>
<div class="b" style="left:672.0px;top:146px;width:36.0px;height:23px;background:#ebf7e9;"></div>
<div class="b" style="left:936.0px;top:261px;width:12.0px;height:23px;background:#99ccbb;"></div>
<div class="b" style="left:1092.0px;top:307px;width:36.0px;height:23px;background:#ebf7e9;"></div>
<div class="b" style="left:1740.0px;top:307px;width:24.0px;height:23px;background:#ebf7e9;"></div>
<span class="t code" style="left:588px;top:100px;height:23px;line-height:23px;color:#000;"><span class="kw">package</span> com.example.demo;</span>
<span class="t code" style="left:588px;top:146px;height:23px;line-height:23px;color:#000;"><span class="kw">import</span> <span style="color:#808080">...</span></span>
<span class="t code" style="left:588px;top:192px;height:23px;line-height:23px;color:#000;"><span class="cm">//<span class="cn">开启</span>mapper<span class="cn">接口扫描，指定扫描基础包</span></span></span>
<span class="t code" style="left:588px;top:215px;height:23px;line-height:23px;color:#000;"><span class="ann">@MapperScan</span>(basePackages = <span class="str">"com.example.demo.dao"</span>)</span>
<span class="t code" style="left:588px;top:238px;height:23px;line-height:23px;color:#000;"><span class="ann">@SpringBootApplication</span></span>
<span class="t code" style="left:588px;top:261px;height:23px;line-height:23px;color:#000;"><span class="kw">public class</span> <span style="text-decoration:underline wavy #b4b4b4 1px;text-underline-offset:1px">DemoApplication</span> {</span>
<span class="t code" style="left:588px;top:307px;height:23px;line-height:23px;color:#000;">    <span class="kw">public static void</span> main(String<span style="color:#d0229a">[]</span> args) <span style="color:#5a5a5a">{</span> SpringApplication.<i>run</i>(DemoApplication.<span class="kw">class</span>, args); <span style="color:#5a5a5a">}</span></span>
<svg class="i" style="left:574px;top:152px" width="13" height="13" viewBox="0 0 13 13"><rect x=".5" y=".5" width="12" height="12" fill="#fff" stroke="#c6c6c6"/><path d="M3 6.500h7M6.500 3v7" stroke="#b4b4b4" stroke-width="1"/></svg>
<div class="b" style="left:580px;top:234px;width:1px;height:9px;background:#c6c6c6;"></div>
<svg class="i" style="left:574px;top:221px" width="13" height="14" viewBox="0 0 13 14"><path d="M.5 .5h11.500v7.500L6.250 13.500.5 8z" fill="#fff" stroke="#c6c6c6"/><path d="M3.500 6.5h5.500" stroke="#b0b0b0"/></svg>
<svg class="i" style="left:574px;top:242.5px" width="13" height="14" viewBox="0 0 13 14"><path d="M.5 13.500h11.500V6L6.250 .500.5 6z" fill="#fff" stroke="#c6c6c6"/><path d="M3.500 8h5.500" stroke="#b0b0b0"/></svg>
<svg class="i" style="left:524px;top:240px" width="19" height="19" viewBox="0 0 19 19"><circle cx="10" cy="9.200" r="8.300" fill="#8fc976"/><path d="M3.500 5.500L15.500 15.500M9.500 2.500l7.500 7" stroke="#f0f0f0" stroke-width="1.100"/><circle cx="5" cy="11.800" r="3.600" fill="#f0f0f0"/><circle cx="5" cy="11.800" r="2.700" fill="#f0f0f0" stroke="#8c98a1" stroke-width="1.200"/><path d="M7 14l3 3" stroke="#8c98a1" stroke-width="1.400"/></svg>
<svg class="i" style="left:524px;top:262px" width="19" height="19" viewBox="0 0 19 19"><circle cx="9" cy="9" r="8.200" fill="#8fc976"/><path d="M2.500 5l11 10M8.500 2.500l8 7.500" stroke="#f0f0f0" stroke-width="1.100"/><circle cx="13.200" cy="13.400" r="5.300" fill="#f0f0f0"/><circle cx="13.200" cy="13.400" r="4.600" fill="#6bbde0"/><text x="13.200" y="15.700" text-anchor="middle" font-family="Liberation Sans,sans-serif" font-size="6.500" font-weight="700" fill="#3f5968">C</text><path d="M13.200 16h5.600l-2.800 2.800z" fill="#5a5a5a"/></svg>
<svg class="i" style="left:551px;top:265.700px" width="11" height="15" viewBox="0 0 11 15"><path d="M0 0L10.400 7.100 0 14.200z" fill="#59a869"/></svg>
<div class="b" style="left:569px;top:261px;width:1px;height:53px;background:#5f8a6f;"></div>
<svg class="i" style="left:539px;top:311.800px" width="11" height="15" viewBox="0 0 11 15"><path d="M0 0L10.400 7.100 0 14.200z" fill="#59a869"/></svg>
<div class="b" style="left:545px;top:313px;width:287px;height:107px;background:#f2f2f2;border:1px solid #c2c2c2;box-sizing:border-box;box-shadow:1px 1px 2px rgba(0,0,0,.08);"></div>
<div class="b" style="left:546px;top:314px;width:285px;height:21px;background:#2274c4;"></div>
<svg class="i" style="left:552px;top:317.500px" width="13" height="14" viewBox="0 0 13 14"><path d="M1 .6L10.700 6.600 1 12.600z" fill="#59a869"/></svg>
<span class="t" style="left:570.3px;top:315.0px;height:19px;line-height:19px;font-size:13px;color:#fff;letter-spacing:0.038px;">R<u>u</u>n 'DemoApplication'</span>
<span class="t" style="left:736.0px;top:315.0px;height:19px;line-height:19px;font-size:13px;color:#fff;letter-spacing:-0.059px;">Ctrl+Shift+F10</span>
<svg class="i" style="left:550px;top:338px;" width="15" height="15"><use href="#i-bug"/></svg>
<span class="t" style="left:570.3px;top:336.0px;height:19px;line-height:19px;font-size:13px;color:#000;letter-spacing:0.145px;"><u>D</u>ebug 'DemoApplication'</span>
<svg class="i" style="left:550px;top:359px;" width="15" height="15"><use href="#i-cover"/></svg>
<span class="t" style="left:570.3px;top:357.0px;height:19px;line-height:19px;font-size:13px;color:#000;letter-spacing:0.031px;">Run 'DemoApplication' with Co<u>v</u>erage</span>
<svg class="i" style="left:549px;top:379.5px;" width="16" height="16"><use href="#i-vvm"/></svg>
<span class="t" style="left:570.3px;top:378.0px;height:19px;line-height:19px;font-size:13px;color:#000;letter-spacing:0.022px;">Run with VisualVM 'DemoApplication'</span>
<svg class="i" style="left:549px;top:400.5px;" width="16" height="16"><use href="#i-vvmd"/></svg>
<span class="t" style="left:570.3px;top:399.0px;height:19px;line-height:19px;font-size:13px;color:#000;letter-spacing:0.090px;">Debug with VisualVM 'DemoApplication'</span>
<div class="b" style="left:525px;top:303px;width:314px;height:37px;background:transparent;border:2px solid #f80c0c;box-sizing:border-box;"></div>
<div class="b" style="left:1898px;top:75px;width:1px;height:898px;background:#a0a0a0;"></div>
<svg class="i" style="left:1903.500px;top:85px" width="12" height="13" viewBox="0 0 12 13"><ellipse cx="6" cy="2.300" rx="5.500" ry="2" fill="#7a7a7a"/><path d="M.5 3.800c0 2.600 11 2.600 11 0v1.700c0 2.600-11 2.600-11 0zM.5 6.800c0 2.600 11 2.600 11 0v1.700c0 2.600-11 2.600-11 0zM.5 9.800c0 2.600 11 2.600 11 0v1c0 2.600-11 2.600-11 0z" fill="#7a7a7a"/></svg>
<span class="t" style="left:0.0px;top:-8.8px;height:17.5px;line-height:17.5px;font-size:11.5px;color:#000;letter-spacing:-0.317px;left:1907.5px;top:103px;transform-origin:0 0;transform:rotate(90deg) translateY(-50%);">Database</span>
<span class="t" style="left:1903.0px;top:168.0px;height:16px;line-height:16px;font-size:15px;color:#7a7a7a;font-weight:700;font-style:italic;letter-spacing:-0.644px;">m</span>
<span class="t" style="left:0.0px;top:-8.8px;height:17.5px;line-height:17.5px;font-size:11.5px;color:#000;letter-spacing:-0.146px;left:1908px;top:188.6px;transform-origin:0 0;transform:rotate(90deg) translateY(-50%);">Maven</span>
<svg class="i" style="left:1903px;top:247px" width="12" height="12" viewBox="0 0 12 12"><path d="M.8 6.500C.3 3 2.800 .5 6.500 .5c2.500 0 4.500 1.500 5 3.500L6 9.500 3 7 1.500 8.500z" fill="#6e6e6e"/><path d="M3 8.200l2.800 2.600 5.700-5.600" fill="none" stroke="#6e6e6e" stroke-width="1.500"/></svg>
<span class="t" style="left:0.0px;top:-8.8px;height:17.5px;line-height:17.5px;font-size:11.5px;color:#000;letter-spacing:0.039px;left:1908px;top:263.7px;transform-origin:0 0;transform:rotate(90deg) translateY(-50%);">Bean Validation</span>
<svg class="i" style="left:1903px;top:367px" width="12" height="12" viewBox="0 0 12 12"><ellipse cx="6" cy="7.500" rx="2.200" ry="3.300" fill="#6e6e6e"/><circle cx="6" cy="3" r="1.700" fill="#6e6e6e"/><path d="M.5 2.500l4 3.500M.3 7h4M.8 11.500l3.700-3M11.500 2.500l-4 3.500M11.700 7h-4M11.200 11.500l-3.700-3" stroke="#6e6e6e" stroke-width="1.100"/></svg>
<span class="t" style="left:0.0px;top:-8.8px;height:17.5px;line-height:17.5px;font-size:11.5px;color:#000;letter-spacing:0.130px;left:1908px;top:384.4px;transform-origin:0 0;transform:rotate(90deg) translateY(-50%);">Ant Build</span>
<svg class="i" style="left:1904px;top:886px" width="11" height="12" viewBox="0 0 11 12"><rect x="0" y="0" width="1" height="12" fill="#6e6e6e"/><rect x="2" y="0" width="9" height="12" fill="#6e6e6e"/><rect x="4" y="2" width="5" height="2.500" fill="#f2f2f2"/><rect x="4" y="6" width="5" height="1" fill="#f2f2f2"/><rect x="4" y="8" width="5" height="1" fill="#f2f2f2"/></svg>
<span class="t" style="left:0.0px;top:-8.8px;height:17.5px;line-height:17.5px;font-size:11.5px;color:#000;letter-spacing:0.268px;left:1908px;top:902.7px;transform-origin:0 0;transform:rotate(90deg) translateY(-50%);">Word Book</span>
<div class="b" style="left:0px;top:973px;width:1920px;height:1px;background:#a0a0a0;"></div>
<div class="b" style="left:0px;top:995px;width:1920px;height:1px;background:#a3a3a3;"></div>
<svg class="i" style="left:32px;top:979px" width="14" height="14" viewBox="0 0 14 14"><ellipse cx="7" cy="7.500" rx="5" ry="4" fill="#e02828"/><circle cx="10.500" cy="5" r="2" fill="#3a3a3a"/><path d="M1 4l3 2M1 12l3-2M6 2l1 3M12 11l-2-2M5 13l1-2" stroke="#3a3a3a" stroke-width="1"/><circle cx="5" cy="7" r="1" fill="#3a3a3a"/><circle cx="8" cy="9" r="1" fill="#3a3a3a"/></svg>
<span class="t" style="left:50.0px;top:977.0px;height:18px;line-height:18px;font-size:12px;color:#000;letter-spacing:-0.339px;">FindBugs-IDEA</span>
<svg class="i" style="left:153px;top:980.2px" width="11" height="10" viewBox="0 0 12 11"><rect width="12" height="11" fill="#6e6e6e"/><path d="M2 2.500l3 2.500-3 2.500M6 8.500h4" stroke="#f2f2f2" stroke-width="1.200" fill="none"/></svg>
<span class="t" style="left:168.8px;top:977.0px;height:18px;line-height:18px;font-size:12px;color:#000;letter-spacing:-0.070px;">Terminal</span>
<svg class="i" style="left:235px;top:980px" width="13" height="12" viewBox="0 0 13 12"><path d="M6.500 .5L12.500 11.500H.5z" fill="#6e6e6e"/><path d="M6.500 4.500v3.500M6.500 9v1.300" stroke="#f2f2f2" stroke-width="1.300"/></svg>
<span class="t" style="left:252.3px;top:977.0px;height:18px;line-height:18px;font-size:12px;color:#000;letter-spacing:-0.273px;">Problems</span>
<svg class="i" style="left:323px;top:980px" width="13" height="12" viewBox="0 0 13 12"><path d="M.5 .5h11v3h-8v8h-3z" fill="#6e6e6e"/><rect x="4.500" y="4.500" width="8" height="7" fill="none" stroke="#6e6e6e"/><path d="M6 7h2M9 7h2M6 9.500h2M9 9.500h2" stroke="#6e6e6e"/></svg>
<span class="t" style="left:339.8px;top:977.0px;height:18px;line-height:18px;font-size:12px;color:#000;letter-spacing:-0.432px;">Java Enterprise</span>
<svg class="i" style="left:439px;top:980px" width="14" height="12" viewBox="0 0 14 12"><path d="M1 9.500C0 5 4 1.500 11 2c.8-.2 1.500-.8 2-1.500.8 4 0 9.500-6 9.500-2 0-3.500-.8-4.500-1.800-.6.600-1 1.200-1.500 2z" fill="#6e6e6e"/></svg>
<span class="t" style="left:456.8px;top:977.0px;height:18px;line-height:18px;font-size:12px;color:#000;letter-spacing:-0.131px;">Spring</span>
<svg class="i" style="left:511px;top:981px" width="9" height="10" viewBox="0 0 9 10"><path d="M.5 .5L8.500 5 .5 9.500z" fill="#6e6e6e"/></svg>
<span class="t" style="left:526.8px;top:977.0px;height:18px;line-height:18px;font-size:12px;color:#000;letter-spacing:-0.427px;"><u>4</u>: Run</span>
<svg class="i" style="left:582px;top:981px" width="12" height="9" viewBox="0 0 12 9"><path d="M0 1h2M0 4.500h2M0 8h2M3.500 1H12M3.500 4.500H12M3.500 8H12" stroke="#6e6e6e" stroke-width="1.400"/></svg>
<span class="t" style="left:597.9px;top:977.0px;height:18px;line-height:18px;font-size:12px;color:#000;letter-spacing:-0.554px;"><u>6</u>: TODO</span>
<svg class="i" style="left:1819px;top:979.3px" width="13" height="13" viewBox="0 0 14 14"><path d="M7 1a6 6 0 1 0 0 12h6V7a6 6 0 0 0-6-6z" fill="none" stroke="#6e6e6e" stroke-width="1.400"/></svg>
<span class="t" style="left:1836.6px;top:977.0px;height:18px;line-height:18px;font-size:12px;color:#000;letter-spacing:-0.350px;">Event Log</span>
<svg class="i" style="left:9px;top:1000px" width="14" height="14" viewBox="0 0 14 14"><rect x="3.500" y="1.500" width="9" height="9" fill="none" stroke="#6e6e6e"/><path d="M1.500 3.500v9h9" fill="none" stroke="#6e6e6e"/></svg>
<span class="t" style="left:31.4px;top:996.8px;height:19px;line-height:19px;font-size:13px;color:#000;letter-spacing:0.019px;">DemoApplication: Failed to retrieve application JMX service URL (21 minutes ago)</span>
<span class="t" style="left:1563.3px;top:996.8px;height:19px;line-height:19px;font-size:13px;color:#000;letter-spacing:-0.428px;">16:2</span>
<span class="t" style="left:1598.3px;top:996.8px;height:19px;line-height:19px;font-size:13px;color:#000;letter-spacing:-1.736px;">LF</span>
<span class="t" style="left:1631.0px;top:996.8px;height:19px;line-height:19px;font-size:13px;color:#000;letter-spacing:-0.569px;">UTF-8</span>
<span class="t" style="left:1685.8px;top:996.8px;height:19px;line-height:19px;font-size:13px;color:#000;letter-spacing:-0.143px;">4 spaces</span>
<svg class="i" style="left:1615px;top:1001.3px" width="6" height="10" viewBox="0 0 6 10"><path d="M0 4l3-3.500L6 4zM0 6l3 3.500L6 6z" fill="#7a7a7a"/></svg>
<svg class="i" style="left:1670px;top:1001.3px" width="6" height="10" viewBox="0 0 6 10"><path d="M0 4l3-3.500L6 4zM0 6l3 3.500L6 6z" fill="#7a7a7a"/></svg>
<svg class="i" style="left:1742px;top:1001.3px" width="6" height="10" viewBox="0 0 6 10"><path d="M0 4l3-3.500L6 4zM0 6l3 3.500L6 6z" fill="#7a7a7a"/></svg>
<svg class="i" style="left:1757px;top:998.3px" width="14" height="15" viewBox="0 0 14 15"><rect x="5" y="8.200" width="8.200" height="5.200" fill="#6e6e6e"/><path d="M2.600 8.700V5.500a2.300 2.300 0 0 1 4.600 0v2.700" fill="none" stroke="#6e6e6e" stroke-width="1.400"/></svg>
<svg class="i" style="left:1783px;top:999.3px" width="14" height="14" viewBox="0 0 14 14"><path d="M4 4.700V2.200C4 1.200 5 .7 7 .7s3 .5 3 1.500v2.500z" fill="#6e6e6e"/><rect x=".8" y="4.500" width="12.400" height="1.500" fill="#6e6e6e"/><path d="M3.700 6.300h6.600v2a3.300 3.300 0 0 1-6.600 0z" fill="none" stroke="#6e6e6e" stroke-width="1"/><path d="M1.500 13.800c.2-2 1.500-3 3.200-3.200L7 12l2.300-1.400c1.700.2 3 1.200 3.200 3.200z" fill="#6e6e6e"/><circle cx="5.700" cy="8" r=".6" fill="#6e6e6e"/><circle cx="8.300" cy="8" r=".6" fill="#6e6e6e"/><path d="M5.700 9.500c.8.600 1.800.6 2.600 0" fill="none" stroke="#6e6e6e" stroke-width=".6"/></svg>
<svg class="i" style="left:1807px;top:998.3px" width="15" height="16" viewBox="0 0 15 16"><circle cx="6" cy="6" r="3" fill="none" stroke="#6e6e6e" stroke-width="2.200" stroke-dasharray="2.200 1.500"/><circle cx="6" cy="6" r="2.300" fill="none" stroke="#6e6e6e" stroke-width="1.400"/><path d="M9.500 9.500a2 2 0 1 1 2.500 2v1.200M12 14.200v1.300" fill="none" stroke="#6e6e6e" stroke-width="1.300"/></svg>
<svg class="i" style="left:1832px;top:999.8px" width="13" height="13" viewBox="0 0 48 48"><path fill="#EA4335" d="M24 9.500c3.500 0 6.600 1.200 9.100 3.600l6.800-6.800C35.800 2.400 30.300 0 24 0 14.600 0 6.500 5.400 2.600 13.200l7.900 6.100C12.400 13.700 17.700 9.500 24 9.500z"/><path fill="#4285F4" d="M47 24.500c0-1.600-.2-3.200-.4-4.700H24v9h12.900c-.6 3-2.200 5.500-4.700 7.200l7.600 5.900C44.200 37.800 47 31.700 47 24.500z"/><path fill="#FBBC05" d="M10.500 28.700c-.5-1.500-.8-3-.8-4.700s.3-3.200.8-4.700l-7.900-6.100C.9 16.500 0 20.100 0 24s.9 7.500 2.600 10.800z"/><path fill="#34A853" d="M24 48c6.500 0 11.900-2.100 15.900-5.800l-7.600-5.900c-2.100 1.400-4.900 2.300-8.300 2.300-6.300 0-11.600-4.200-13.500-9.900l-7.900 6.100C6.500 42.600 14.600 48 24 48z"/></svg>
<div class="b" style="left:1850px;top:996px;width:34px;height:21px;background:#bfbfbf;"></div>
<div class="b" style="left:1884px;top:996px;width:2px;height:21px;background:#d6d6d6;"></div>
<span class="t" style="left:1852.0px;top:998.2px;height:17.5px;line-height:17.5px;font-size:11.5px;color:#000;letter-spacing:-0.049px;">355 of 725M</span>
</body></html>
